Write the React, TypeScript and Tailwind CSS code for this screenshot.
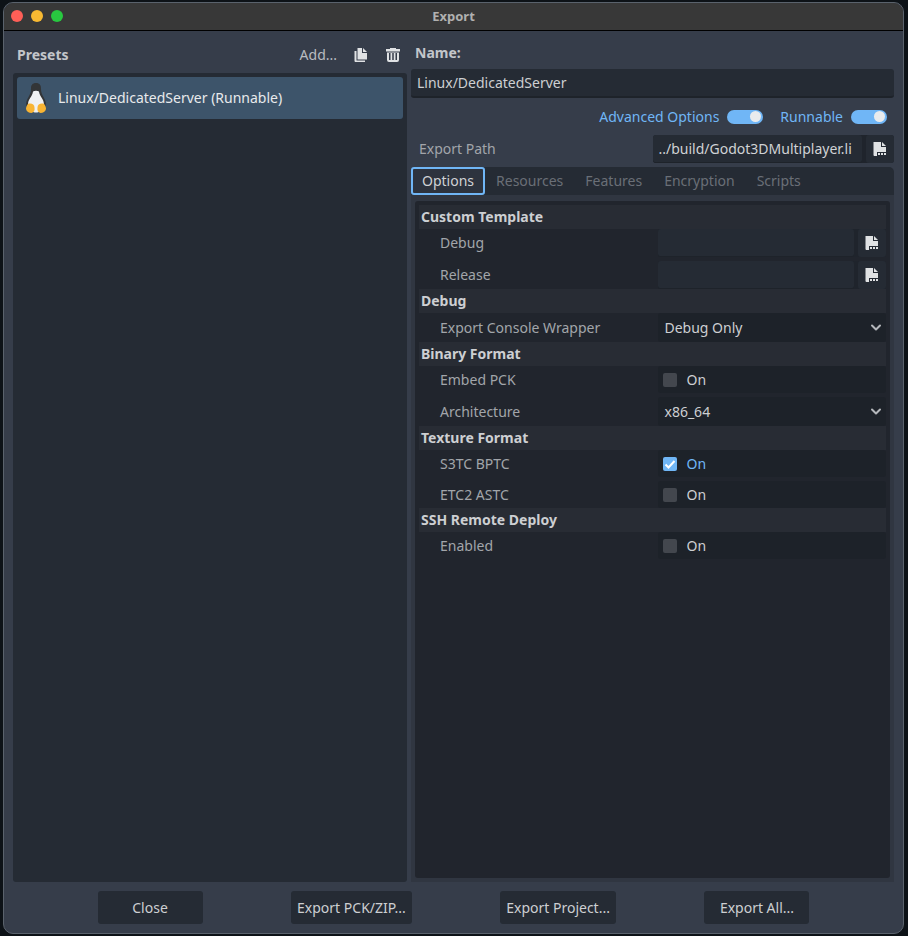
import type { ReactNode } from "react"

const sections = [
  {
    title: "Custom Template",
    rows: [
      { label: "Debug", type: "file" },
      { label: "Release", type: "file" },
    ],
  },
  {
    title: "Debug",
    rows: [{ label: "Export Console Wrapper", type: "select", value: "Debug Only" }],
  },
  {
    title: "Binary Format",
    rows: [
      { label: "Embed PCK", type: "check" },
      { label: "Architecture", type: "select", value: "x86_64" },
    ],
  },
  {
    title: "Texture Format",
    rows: [
      { label: "S3TC BPTC", type: "check", checked: true },
      { label: "ETC2 ASTC", type: "check" },
    ],
  },
  {
    title: "SSH Remote Deploy",
    rows: [{ label: "Enabled", type: "check" }],
  },
]

function FileIcon() {
  return (
    <svg className="h-4 w-4" viewBox="0 0 16 16" fill="#e0e2e4">
      <path d="M1.500 1H9v5h5v5H5v4H2.500a1 1 0 0 1-1-1z" />
      <path d="M10 1l4 4h-4z" />
      <path d="M6 12h2v2H6zM9 12h2v2H9zM12 12h2v2h-2z" />
    </svg>
  )
}

function DuplicateIcon() {
  return (
    <svg className="h-4 w-4" viewBox="0 0 16 16" fill="#e0e2e4">
      <path d="M4.500 1H9v5h5v6.500H4.500z" />
      <path d="M10 1l4 4h-4z" />
      <path d="M1.500 4h2v9.500H12V15H2.500a1 1 0 0 1-1-1z" />
    </svg>
  )
}

function TrashIcon() {
  return (
    <svg className="h-4 w-4" viewBox="0 0 16 16" fill="#e0e2e4">
      <path d="M5 1h6v1h4v2.500H1V2h4z" />
      <path
        fillRule="evenodd"
        d="M2 5.500h12V13a2 2 0 0 1-2 2H4a2 2 0 0 1-2-2zM4 6v7h1.500V6zM7.250 6v7h1.500V6zM10.500 6v7H12V6z"
      />
    </svg>
  )
}

function TuxIcon() {
  return (
    <svg className="h-8 w-8" viewBox="0 0 32 32">
      <path
        fill="#333537"
        d="M16 1c-3.500 0-5 2.200-5 5.200 0 4-.8 5.800-2.600 9C6.800 18 5.800 20 6.200 23.500L16 27l9.800-3.500c.4-3.500-.6-5.500-2.200-8.300-1.800-3.200-2.600-5-2.600-9C21 3.200 19.500 1 16 1z"
      />
      <path
        fill="#eff0f2"
        d="M13 9.500c1.500-1 4.500-1 6 0 .5 5 5.300 7.500 5 13.500-.5 5-4.500 7.500-8 7.500S8.500 28 8 23c-.3-6 4.500-8.500 5-13.500z"
      />
      <path
        fill="#f8b433"
        d="M9 21.500c3-.5 5.500 1 5.500 4 .5 3-.5 5-3 5.500C9 31 6.500 29.500 6 27c0-1.500 1-5 3-5.500zM23 21.500c-3-.5-5.500 1-5.500 4-.5 3 .5 5 3 5.500 2.500 0 5-1.500 5.500-4 0-1.500-1-5-3-5.500z"
      />
    </svg>
  )
}

function Toggle({ label }: { label: string }) {
  return (
    <label className="relative flex items-center gap-2 text-[#70b6f6]">
      {label}
      <input type="checkbox" defaultChecked className="sr-only" />
      <span className="flex h-[14px] w-9 items-center justify-end rounded-full bg-[#70b6f6] px-[2px]">
        <span className="h-[11px] w-[11px] rounded-full bg-[#e9ebed]" />
      </span>
    </label>
  )
}

function FileField({ id, label, value }: { id: string; label: string; value?: string }) {
  return (
    <div className="flex h-7 min-w-0 gap-1 rounded-[3px] bg-[#1f242c]">
      <input
        id={id}
        defaultValue={value}
        className="min-w-0 flex-1 rounded-[3px] border-b border-[#1e232a] bg-[#252b34] pr-[10px] pl-[6px] text-[#d0d2d5] outline-none"
      />
      <button aria-label={`Browse ${label}`} className="flex w-7 items-center justify-center rounded-[3px] bg-[#252b34]">
        <FileIcon />
      </button>
    </div>
  )
}

function SelectField({ id, value }: { id: string; value: string }) {
  return (
    <div className="relative h-[29px] rounded-[3px] bg-[#1d2229]">
      <select id={id} className="h-full w-full appearance-none px-[6px] text-[#cdcfd2] outline-none">
        <option>{value}</option>
      </select>
      <svg
        className="pointer-events-none absolute top-[6px] right-[2px] h-4 w-4"
        viewBox="0 0 16 16"
        fill="none"
        stroke="#b4b7bb"
        strokeWidth="2"
        strokeLinecap="round"
        strokeLinejoin="round"
      >
        <path d="M4 6.500l4 4 4-4" />
      </svg>
    </div>
  )
}

function CheckField({ id, checked }: { id: string; checked?: boolean }) {
  return (
    <div className="flex h-[27px] items-center gap-[9px] rounded-[3px] bg-[#1d2229] px-[5px]">
      <span className="relative flex">
        <input
          id={id}
          type="checkbox"
          defaultChecked={checked}
          className="h-[14px] w-[14px] appearance-none rounded-[2px] bg-[#43474e] checked:bg-[#70b6f6]"
        />
        {checked && (
          <svg
            className="pointer-events-none absolute inset-0"
            viewBox="0 0 14 14"
            fill="none"
            stroke="#fff"
            strokeWidth="2"
          >
            <path d="M2.500 7.500l3 3 6-6.500" />
          </svg>
        )}
      </span>
      <span className={checked ? "text-[#70b6f6]" : "text-[#cdcfd2]"}>On</span>
    </div>
  )
}

function Row({ id, label, children }: { id: string; label: string; children: ReactNode }) {
  return (
    <div className="grid grid-cols-[20fr_19fr] items-center">
      <label htmlFor={id} className="min-w-0 pl-[21px] text-[#a2a5aa]">
        {label}
      </label>
      {children}
    </div>
  )
}

function PresetList() {
  return (
    <section className="flex flex-col">
      <div className="flex h-[42px] items-center pt-[5px] pr-[6px] pl-1">
        <h2 className="flex-1 font-bold text-[#c3c6ca]">Presets</h2>
        <button className="mr-4 text-[#b9bcc1]">Add...</button>
        <button aria-label="Duplicate" className="mr-4">
          <DuplicateIcon />
        </button>
        <button aria-label="Delete">
          <TrashIcon />
        </button>
      </div>
      <ul className="flex-1 rounded-[3px] bg-[#252b34] p-1">
        <li className="flex h-[42px] items-center gap-[6px] rounded-[3px] bg-[#3d546a] pl-[3px] text-[#e8eaec]">
          <TuxIcon />
          Linux/DedicatedServer (Runnable)
        </li>
      </ul>
    </section>
  )
}

function PresetEditor() {
  return (
    <section className="flex flex-col">
      <label htmlFor="name" className="flex h-[38px] items-center pt-[5px] pl-1 font-bold text-[#c3c6ca]">
        Name:
      </label>
      <input
        id="name"
        defaultValue="Linux/DedicatedServer"
        className="h-[29px] rounded-[3px] border-b-2 border-[#1e232a] bg-[#252b34] px-[6px] text-[#cdcfd2] outline-none"
      />
      <div className="flex h-[37px] items-center justify-end gap-[17px] pr-[7px]">
        <Toggle label="Advanced Options" />
        <Toggle label="Runnable" />
      </div>
      <div className="mb-1 grid grid-cols-2 items-center">
        <label htmlFor="export-path" className="pl-2 text-[#a2a5aa]">
          Export Path
        </label>
        <FileField id="export-path" label="Export Path" value="../build/Godot3DMultiplayer.linux" />
      </div>
      <div role="tablist" className="flex h-7 rounded-t-[5px] bg-[#252b34] text-[#6a6f77]">
        <button role="tab" className="rounded-[3px] border-2 border-[#70b6f6] bg-[#2d333e] px-[9px] text-[#d0d2d5]">
          Options
        </button>
        <button role="tab" className="px-[11px]">Resources</button>
        <button role="tab" className="px-[11px]">Features</button>
        <button role="tab" className="px-[11px]">Encryption</button>
        <button role="tab" className="px-[11px]">Scripts</button>
      </div>
      <div className="flex flex-1 flex-col bg-[#303641] px-1 pt-[6px] pb-1">
        <div className="flex-1 rounded-[3px] bg-[#21252d] p-1">
          {sections.map((section) => (
            <div key={section.title}>
              <h3 className="flex h-6 items-center bg-[#282c34] pl-[2px] font-bold text-[#cdcfd2]">{section.title}</h3>
              <div className="flex flex-col gap-1">
                {section.rows.map((row) => {
                  const id = `${section.title}-${row.label}`.replaceAll(" ", "-")
                  return (
                    <Row key={id} id={id} label={row.label}>
                      {row.type === "file" && <FileField id={id} label={row.label} />}
                      {row.type === "select" && <SelectField id={id} value={row.value!} />}
                      {row.type === "check" && <CheckField id={id} checked={row.checked} />}
                    </Row>
                  )
                })}
              </div>
            </div>
          ))}
        </div>
      </div>
    </section>
  )
}

export default function App() {
  const actions = ["Close", "Export PCK/ZIP...", "Export Project...", "Export All..."]
  return (
    <div className="flex h-screen bg-[#0d1217] py-[2px] pr-1 pl-[3px] font-['Noto_Sans',sans-serif] text-[14px] leading-5">
      <main className="flex flex-1 flex-col overflow-hidden rounded-[10px] border border-[#5a626c] bg-[#363d4a]">
        <header className="grid h-7 shrink-0 grid-cols-3 items-center border-b border-black bg-[#383838] px-[7px] pb-[2px]">
          <div className="flex gap-2 pt-[1px]">
            <span className="h-3 w-3 rounded-full bg-[#fe5f57]" />
            <span className="h-3 w-3 rounded-full bg-[#f8b932]" />
            <span className="h-3 w-3 rounded-full bg-[#28c840]" />
          </div>
          <h1 className="text-center text-[13px] leading-4 font-bold text-[#b0b0b0]">Export</h1>
        </header>
        <div className="grid flex-1 grid-cols-[394fr_483fr] gap-1 px-[9px]">
          <PresetList />
          <PresetEditor />
        </div>
        <footer className="flex h-[51px] shrink-0 items-center justify-evenly gap-1 px-[9px]">
          {actions.map((action) => (
            <button
              key={action}
              className="h-[33px] min-w-[105px] rounded-[3px] bg-[#252b34] px-[6px] text-[#cdcfd2]"
            >
              {action}
            </button>
          ))}
        </footer>
      </main>
    </div>
  )
}
